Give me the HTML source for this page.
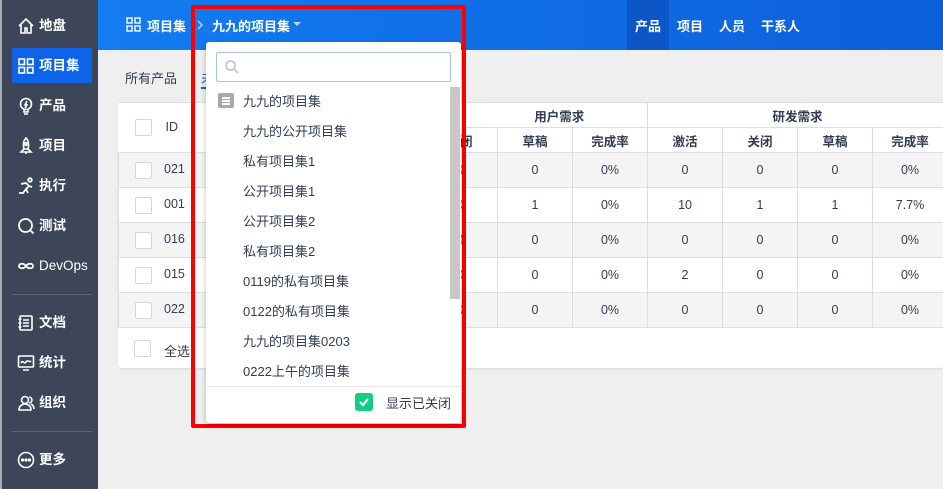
<!DOCTYPE html>
<html><head><meta charset="utf-8"><style>
*{box-sizing:border-box;margin:0;padding:0}
body{width:943px;height:489px;overflow:hidden;background:#efefef;font-family:"Liberation Sans","Noto Sans CJK SC",sans-serif;font-size:13px;color:#313c52;position:relative}
.a{position:absolute}
#side{left:0;top:0;width:98px;height:489px;background:#3c4658;border-left:2px solid #a8abb2}
.si{position:absolute;left:10px;width:80px;height:35px;color:#fff;font-weight:bold;font-size:13.5px;line-height:35px;padding-left:5px;display:flex;align-items:center;gap:4px}
.si svg{width:18px;height:18px;flex:none}
.act{background:#0f63e8;border-radius:2px}
.hr{position:absolute;left:10px;width:80px;height:1px;background:#5d6677}
#top{left:98px;top:0;width:845px;height:50px;background:linear-gradient(90deg,#137cf0,#0c5fda);color:#fff;font-weight:bold}
table{border-collapse:collapse;position:absolute;left:118px;top:102px;width:825px;table-layout:fixed;background:#fff}
td{border:1px solid #dcdde3;text-align:center;height:35px;font-size:12.5px}
.cb{display:inline-block;width:17px;height:17px;border:1px solid #d4d6db;border-radius:2px;background:#fff;vertical-align:middle}
.it{position:absolute;left:243px;font-size:13px;color:#313c52}
</style></head><body>
<div id="side" class="a">
 <div class="si" style="top:8px"><svg viewBox="0 0 18 18" fill="none" stroke="#fff" stroke-width="1.6"><path d="M2 9 9 2l7 7M4 7v9h4v-5h2v5h4V7"/></svg>地盘</div>
 <div class="si act" style="top:48px"><svg viewBox="0 0 18 18" fill="none" stroke="#fff" stroke-width="1.6"><rect x="2" y="2" width="5.5" height="5.5"/><rect x="10.5" y="2" width="5.5" height="5.5"/><rect x="2" y="10.5" width="5.5" height="5.5"/><rect x="10.5" y="10.5" width="5.5" height="5.5"/></svg>项目集</div>
 <div class="si" style="top:88px"><svg viewBox="0 0 18 18" fill="none" stroke="#fff" stroke-width="1.6"><circle cx="9" cy="7" r="5.5"/><path d="M7 13v2h4v-2M7 17h4M10 4 8 8h2l-2 3"/></svg>产品</div>
 <div class="si" style="top:128px"><svg viewBox="0 0 18 18" fill="none" stroke="#fff" stroke-width="1.6"><path d="M9 1c3 3 3 7 2 11H7C6 8 6 4 9 1zM7 12l-3 3h10l-3-3M9 15v2"/><circle cx="9" cy="7" r="1.3"/></svg>项目</div>
 <div class="si" style="top:168px"><svg viewBox="0 0 18 18" fill="none" stroke="#fff" stroke-width="1.8"><circle cx="13" cy="3" r="1.8"/><path d="M4 7l5-1 3 3-3 3 2 4M9 12l-3 4H2M12 9l3 1"/></svg>执行</div>
 <div class="si" style="top:208px"><svg viewBox="0 0 18 18" fill="none" stroke="#fff" stroke-width="1.8"><circle cx="8.5" cy="8.5" r="6.5"/><path d="M12.5 12.5 16.5 16.5"/></svg>测试</div>
 <div class="si" style="top:248px"><svg viewBox="0 0 18 18" fill="none" stroke="#fff" stroke-width="1.8"><path d="M9 9c-2-3-7-3-7 0s5 3 7 0c2-3 7-3 7 0s-5 3-7 0z"/></svg><span style="font-weight:normal">DevOps</span></div>
 <div class="hr" style="top:294px"></div>
 <div class="si" style="top:305px"><svg viewBox="0 0 18 18" fill="none" stroke="#fff" stroke-width="1.6"><rect x="3" y="2" width="12" height="14" rx="1"/><path d="M6 6h6M6 9h6M6 12h6M1.5 5h3M1.5 9h3M1.5 13h3"/></svg>文档</div>
 <div class="si" style="top:345px"><svg viewBox="0 0 18 18" fill="none" stroke="#fff" stroke-width="1.6"><rect x="1.5" y="2" width="15" height="11" rx="1"/><path d="M4 9c2-4 3 2 5-1s3 1 5-1M6 16h6"/></svg>统计</div>
 <div class="si" style="top:385px"><svg viewBox="0 0 18 18" fill="none" stroke="#fff" stroke-width="1.6"><circle cx="8" cy="6" r="3.5"/><path d="M2 16c0-4 3-6 6-6s6 2 6 6zM12 3a3 3 0 0 1 0 6M14 10c2 1 3 3 3 5"/></svg>组织</div>
 <div class="hr" style="top:431px"></div>
 <div class="si" style="top:442px"><svg viewBox="0 0 18 18" fill="none" stroke="#fff" stroke-width="1.6"><circle cx="9" cy="9" r="7.5"/><circle cx="5.5" cy="9" r=".8" fill="#fff"/><circle cx="9" cy="9" r=".8" fill="#fff"/><circle cx="12.5" cy="9" r=".8" fill="#fff"/></svg>更多</div>
</div>
<div id="top" class="a">
 <svg class="a" style="left:28px;top:17px" width="15" height="15" viewBox="0 0 15 15" fill="none" stroke="#fff" stroke-width="1.4"><rect x="1" y="1" width="5" height="5"/><rect x="9" y="1" width="5" height="5"/><rect x="1" y="9" width="5" height="5"/><rect x="9" y="9" width="5" height="5"/></svg>
 <span class="a" style="left:49px;top:16px;font-size:13px">项目集</span>
 <svg class="a" style="left:98px;top:19px" width="8" height="12" viewBox="0 0 8 12" fill="none" stroke="#a9c8f5" stroke-width="1.6"><path d="M2 2l4 4-4 4"/></svg>
 <span class="a" style="left:114px;top:16px;font-size:13px">九九的项目集</span>
 <span class="a" style="left:195px;top:22px;border:4px solid transparent;border-top:4px solid #bcd5fa"></span>
 <div class="a" style="left:529px;top:0;width:42px;height:50px;background:#0c56c8"></div>
 <span class="a" style="left:537px;top:16px">产品</span>
 <span class="a" style="left:579px;top:16px">项目</span>
 <span class="a" style="left:621px;top:16px">人员</span>
 <span class="a" style="left:663px;top:16px">干系人</span>
</div>
<span class="a" style="left:125px;top:68px">所有产品</span>
<span class="a" style="left:201px;top:68px;color:#0c62e8">未</span>
<div class="a" style="left:201px;top:87px;width:20px;height:2px;background:#0c62e8"></div>
<div class="a" style="left:118px;top:102px;width:825px;height:266px;background:#fff;border-radius:3px;box-shadow:0 1px 2px rgba(0,0,0,.1)"></div>
<table>
<colgroup><col style="width:304px"><col style="width:75px"><col style="width:75px"><col style="width:75px"><col style="width:75px"><col style="width:75px"><col style="width:75px"><col style="width:75px"></colgroup>
<tr style="height:25px"><td rowspan="2" style="text-align:left;padding-left:16px;border-left:none"><span class="cb"></span><span style="margin-left:14px">ID</span></td><td colspan="3" style="height:25px;font-weight:bold">&nbsp;&nbsp;&nbsp;&nbsp;&nbsp;&nbsp;&nbsp;&nbsp;&nbsp;&nbsp;&nbsp;&nbsp;&nbsp;&nbsp;用户需求</td><td colspan="4" style="height:25px;font-weight:bold">研发需求</td></tr>
<tr style="height:25px;font-weight:bold"><td style="height:25px;font-weight:bold">关闭</td><td style="font-weight:bold;height:25px">草稿</td><td style="font-weight:bold;height:25px">完成率</td><td style="font-weight:bold;height:25px">激活</td><td style="font-weight:bold;height:25px">关闭</td><td style="font-weight:bold;height:25px">草稿</td><td style="font-weight:bold;height:25px">完成率</td></tr>
<tr style="background:#f4f4f4"><td style="text-align:left;padding-left:16px"><span class="cb"></span><span style="margin-left:12px">021</span></td><td style="color:#0c62e8">0</td><td>0</td><td>0%</td><td>0</td><td>0</td><td>0</td><td>0%</td></tr>
<tr><td style="text-align:left;padding-left:16px"><span class="cb"></span><span style="margin-left:12px">001</span></td><td style="color:#0c62e8">0</td><td>1</td><td>0%</td><td>10</td><td>1</td><td>1</td><td>7.7%</td></tr>
<tr style="background:#f4f4f4"><td style="text-align:left;padding-left:16px"><span class="cb"></span><span style="margin-left:12px">016</span></td><td style="color:#0c62e8">0</td><td>0</td><td>0%</td><td>0</td><td>0</td><td>0</td><td>0%</td></tr>
<tr><td style="text-align:left;padding-left:16px"><span class="cb"></span><span style="margin-left:12px">015</span></td><td style="color:#0c62e8">0</td><td>0</td><td>0%</td><td>2</td><td>0</td><td>0</td><td>0%</td></tr>
<tr style="background:#f4f4f4"><td style="text-align:left;padding-left:16px"><span class="cb"></span><span style="margin-left:12px">022</span></td><td style="color:#0c62e8">0</td><td>0</td><td>0%</td><td>0</td><td>0</td><td>0</td><td>0%</td></tr>
</table>
<span class="cb a" style="left:134px;top:340px"></span>
<span class="a" style="left:164px;top:341px">全选</span>
<div class="a" style="left:191px;top:5px;width:275px;height:423px;border:4px solid #ff0000;border-radius:2px"></div>
<div class="a" style="left:206px;top:42px;width:255px;height:381px;background:#fff;border-radius:3px;box-shadow:0 2px 6px rgba(0,0,0,.25)"></div>
<div class="a" style="left:216px;top:52px;width:235px;height:30px;border:1px solid #a9c2e8;border-radius:2px"></div>
<svg class="a" style="left:224px;top:59px" width="16" height="16" viewBox="0 0 16 16" fill="none" stroke="#c4c7ce" stroke-width="1.8"><circle cx="6.5" cy="6.5" r="4.5"/><path d="M10 10l4 4"/></svg>
<div class="a" style="left:450px;top:87px;width:10px;height:212px;background:#c8c8c8"></div>
<div class="a" style="left:218px;top:93px;width:16px;height:15px;background:#a6a9b3;border-radius:2px"></div>
<div class="a" style="left:222px;top:97px;width:8px;height:1.5px;background:#fff"></div>
<div class="a" style="left:222px;top:100px;width:8px;height:1.5px;background:#fff"></div>
<div class="a" style="left:222px;top:103px;width:8px;height:1.5px;background:#fff"></div>
<span class="it" style="top:91px">九九的项目集</span>
<span class="it" style="top:121px">九九的公开项目集</span>
<span class="it" style="top:151px">私有项目集1</span>
<span class="it" style="top:181px">公开项目集1</span>
<span class="it" style="top:211px">公开项目集2</span>
<span class="it" style="top:241px">私有项目集2</span>
<span class="it" style="top:271px">0119的私有项目集</span>
<span class="it" style="top:301px">0122的私有项目集</span>
<span class="it" style="top:331px">九九的项目集0203</span>
<span class="it" style="top:361px">0222上午的项目集</span>
<div class="a" style="left:206px;top:386px;width:255px;height:1px;background:#e8e8e8"></div>
<div class="a" style="left:355px;top:393px;width:18px;height:18px;background:#11cf80;border-radius:3px"></div>
<svg class="a" style="left:357px;top:395px" width="14" height="14" viewBox="0 0 14 14" fill="none" stroke="#fff" stroke-width="2.2"><path d="M3 7l3 3 5-6"/></svg>
<span class="a" style="left:386px;top:393px">显示已关闭</span>
</body></html>
